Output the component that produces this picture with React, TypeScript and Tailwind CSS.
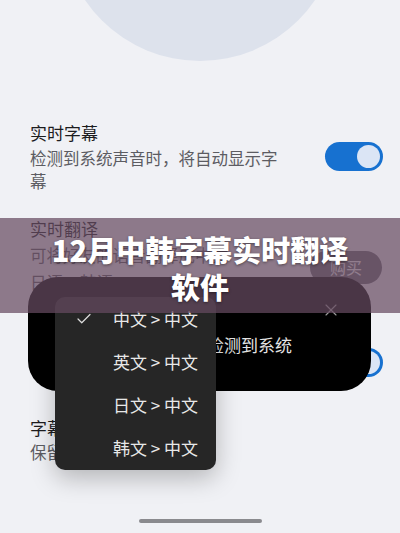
import { Check, X } from "lucide-react";

const menuItems = ["中文 > 中文", "英文 > 中文", "日文 > 中文", "韩文 > 中文"];

function Toggle() {
    return (
        <div className="flex h-[29px] w-[58px] shrink-0 items-center justify-end rounded-full bg-[#1771d0] pr-[3px]">
            <div className="h-[23px] w-[23px] rounded-full bg-[#dbe5f5]" />
        </div>
    );
}

export default function App() {
    return (
        <div className="relative flex h-[533px] w-[400px] flex-col overflow-hidden bg-[#f0f1f5] font-['Noto_Sans_CJK_SC',sans-serif]">
            {/* avatar circle at top */}
            <div className="mx-auto -mt-[217px] h-[278px] w-[278px] shrink-0 rounded-full bg-[#dde2ec]" />

            {/* 实时字幕 */}
            <div className="mt-[60px] flex items-center justify-between pl-[30px] pr-[17px]">
                <div className="w-[256px]">
                    <p className="text-[17px] leading-[24px] text-[#1c1c1e]">实时字幕</p>
                    <p className="mt-[1.5px] text-[16.5px] leading-[23px] text-[#5c5c62]">检测到系统声音时，将自动显示字幕</p>
                </div>
                <Toggle />
            </div>

            {/* 实时翻译 */}
            <div className="mt-[24px] flex justify-between pl-[30px] pr-[18px]">
                <div>
                    <p className="text-[17px] leading-[24px] text-[#1c1c1e]">实时翻译</p>
                    <p className="mt-[3px] text-[16.5px] leading-[23px] text-[#5c5c62]">可将好友的语音翻译成中文</p>
                    <div className="mt-[4px] flex gap-[17px] text-[16.5px] leading-[23px] text-[#5c5c62]">
                        <span>日语</span>
                        <span>韩语</span>
                    </div>
                </div>
                <div className="mt-[34px] flex h-[33px] w-[72px] items-center justify-center rounded-full bg-[#6b6b75] text-[16px] text-white">
                    购买
                </div>
            </div>

            {/* row under the dialog */}
            <div className="mt-[36px] flex h-[65px] items-center justify-between pl-[30px] pr-[17px]">
                <p className="-mt-[35px] text-[17px] leading-[24px] text-[#1c1c1e]">悬浮字幕</p>
                <Toggle />
            </div>

            {/* 字幕记录 */}
            <div className="mt-[21px] pl-[30px]">
                <p className="text-[17px] leading-[24px] text-[#1c1c1e]">字幕记录</p>
                <p className="mt-[1.5px] text-[16.5px] leading-[23px] text-[#5c5c62]">保留最近的字幕记录</p>
            </div>

            <div className="mb-[10px] mt-auto h-[4px] w-[123px] self-center rounded-full bg-[#8a8a8e]" />

            {/* floating subtitle window */}
            <div className="absolute left-[28px] top-[277px] h-[114px] w-[343px] rounded-[30px] bg-black">
                <div className="flex justify-end pr-[30px] pt-[23px]">
                    <X className="h-[20px] w-[20px] text-[#9a9a9a]" strokeWidth={1.4} />
                </div>
                <p className="mt-[13px] pl-[162px] text-[17px] leading-[24px] text-[#e4e4e4]">已检测到系统</p>
            </div>

            {/* language menu */}
            <div className="absolute left-[55px] top-[297px] w-[161px] rounded-[10px] bg-[#262626] py-[0.5px] shadow-[0_8px_24px_rgba(0,0,0,0.25)]">
                {menuItems.map((item, i) => (
                    <div key={item} className="flex h-[43px] items-center justify-between pl-[20px] pr-[18px]">
                        <span className="w-[18px]">
                            {i === 0 && <Check className="h-[18px] w-[18px] text-[#dedede]" strokeWidth={1.6} />}
                        </span>
                        <span className="text-[17px] text-[#e8e8e8]">{item}</span>
                    </div>
                ))}
            </div>

            {/* title band */}
            <div className="absolute inset-x-0 top-[218px] h-[95px] bg-[rgba(103,75,97,0.72)] pt-[13px] text-center">
                <h1 className="px-[40px] text-[29px] font-black leading-[37px] text-white [text-shadow:0_1px_3px_rgba(0,0,0,0.45)]">
                    12月中韩字幕实时翻译软件
                </h1>
            </div>
        </div>
    );
}
